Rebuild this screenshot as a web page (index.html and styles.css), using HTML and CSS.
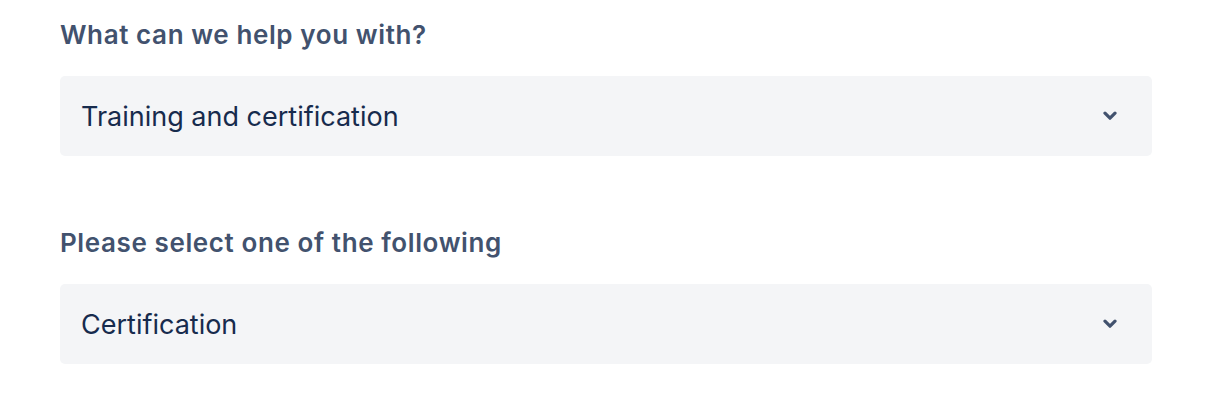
FILE: index.html
```html
<!DOCTYPE html>
<html lang="en">
<head>
<meta charset="utf-8">
<title>Support form</title>
<link rel="stylesheet" href="styles.css">
</head>
<body>
<form class="form">
  <div class="field">
    <label class="label">What can we help you with?</label>
    <div class="select">
      <span class="value">Training and certification</span>
      <svg class="chevron" width="14" height="10" viewBox="0 0 14 10"><path d="M2 2.2 L7 7.2 L12 2.2" fill="none" stroke="#42526E" stroke-width="3.2" stroke-linecap="round" stroke-linejoin="round"/></svg>
    </div>
  </div>
  <div class="field">
    <label class="label">Please select one of the following</label>
    <div class="select">
      <span class="value">Certification</span>
      <svg class="chevron" width="14" height="10" viewBox="0 0 14 10"><path d="M2 2.2 L7 7.2 L12 2.2" fill="none" stroke="#42526E" stroke-width="3.2" stroke-linecap="round" stroke-linejoin="round"/></svg>
    </div>
  </div>
</form>
</body>
</html>
```

FILE: styles.css
```css
html, body {
  margin: 0;
  padding: 0;
  background: #ffffff;
}
body {
  font-family: Inter, "Noto Sans", sans-serif;
}
.form {
  display: flex;
  flex-direction: column;
  gap: 71px;
  padding: 19px 66px 0 60px;
}
.field {
  display: flex;
  flex-direction: column;
  gap: 25px;
}
.label {
  font-size: 26px;
  line-height: 32px;
  font-weight: 600;
  letter-spacing: 0.6px;
  color: #42526E;
}
.select {
  height: 80px;
  box-sizing: border-box;
  background: #F4F5F7;
  border-radius: 5px;
  display: flex;
  align-items: center;
  justify-content: space-between;
  padding: 0 35px 0 21px;
}
.value {
  font-size: 27px;
  color: #172B4D;
}
.chevron {
  display: block;
}
```
